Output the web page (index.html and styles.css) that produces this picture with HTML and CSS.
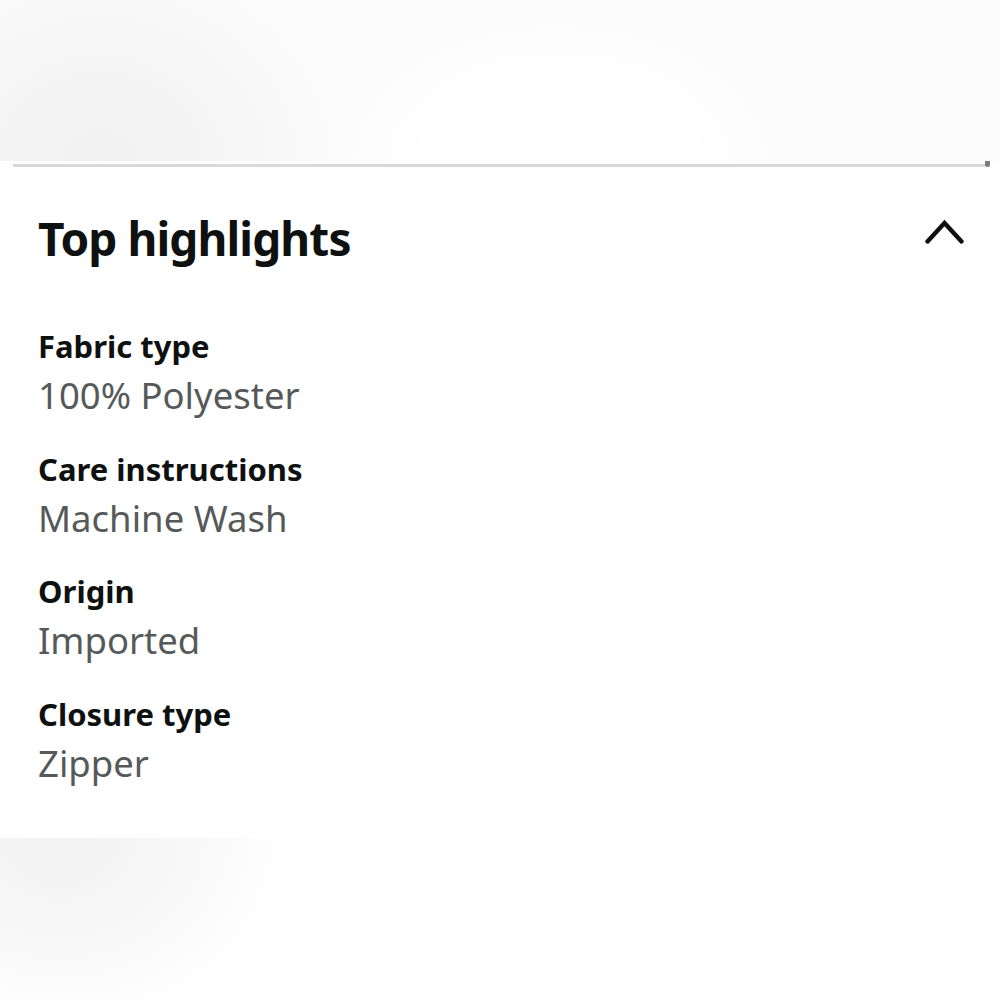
FILE: index.html
```html
<!DOCTYPE html>
<html lang="en">
<head>
<meta charset="utf-8">
<title>Top highlights</title>
<link rel="stylesheet" href="styles.css">
</head>
<body>
<div class="hero"></div>
<div class="rule-row">
  <div class="rule"></div>
  <div class="rule-knob"></div>
</div>
<section class="panel">
  <header class="panel-head">
    <h2 class="panel-title">Top highlights</h2>
    <svg class="chevron" width="40" height="60" viewBox="0 0 40 60" aria-hidden="true">
      <polyline points="2.5,33.5 19.5,15 36.5,33.5" fill="none" stroke="#0f1111" stroke-width="4.4" stroke-linecap="round" stroke-linejoin="miter"/>
    </svg>
  </header>
  <dl class="facts">
    <div class="fact">
      <dt class="fact-label">Fabric type</dt>
      <dd class="fact-value">100% Polyester</dd>
    </div>
    <div class="fact">
      <dt class="fact-label">Care instructions</dt>
      <dd class="fact-value">Machine Wash</dd>
    </div>
    <div class="fact">
      <dt class="fact-label">Origin</dt>
      <dd class="fact-value">Imported</dd>
    </div>
    <div class="fact">
      <dt class="fact-label">Closure type</dt>
      <dd class="fact-value">Zipper</dd>
    </div>
  </dl>
</section>
<div class="foot-shade"></div>
</body>
</html>
```
FILE: styles.css
```css
html, body {
  margin: 0;
  padding: 0;
  background: #ffffff;
}
body {
  font-family: "Noto Sans", "Open Sans", sans-serif;
  color: #0f1111;
  width: 1000px;
  height: 1000px;
  overflow: hidden;
}
.hero {
  height: 161px;
  background:
    radial-gradient(ellipse 260px 230px at 100px 165px, #f1f1f1 0%, #f5f5f5 45%, #f9f9f9 75%, rgba(252,252,252,0) 100%),
    radial-gradient(ellipse 220px 150px at 560px 170px, #ffffff 0%, #ffffff 60%, rgba(255,255,255,0) 100%),
    linear-gradient(#fcfcfc, #fcfcfc);
}
.rule-row {
  display: flex;
  align-items: flex-end;
  height: 6px;
  margin: 0 10px 0 13px;
}
.rule {
  flex: 1;
  height: 3px;
  background: #d9d9d9;
}
.rule-knob {
  width: 5px;
  height: 6px;
  background: #7a7a7a;
  border-radius: 0 0 3px 3px;
}
.panel {
  box-sizing: border-box;
  height: 671px;
  padding: 41px 35px 0 38px;
  background: #ffffff;
}
.panel-head {
  display: flex;
  justify-content: space-between;
  align-items: flex-start;
  height: 60px;
}
.panel-title {
  margin: 0;
  font-size: 46px;
  line-height: 60px;
  font-weight: 700;
  letter-spacing: -0.9px;
  color: #0f1111;
}
.chevron {
  display: block;
}
.facts {
  margin: 58px 0 0;
  padding: 0;
  display: flex;
  flex-direction: column;
  gap: 29.5px;
}
.fact {
  display: flex;
  flex-direction: column;
}
.fact-label {
  font-size: 31px;
  line-height: 40px;
  font-weight: 700;
  color: #0f1111;
}
.fact-value {
  margin: 5px 0 0;
  font-size: 36.5px;
  line-height: 48px;
  color: #565959;
}
.foot-shade {
  height: 162px;
  background:
    radial-gradient(ellipse 230px 190px at 60px 0px, #f2f2f2 0%, #f6f6f6 40%, #fafafa 70%, rgba(255,255,255,0) 100%);
}
```
